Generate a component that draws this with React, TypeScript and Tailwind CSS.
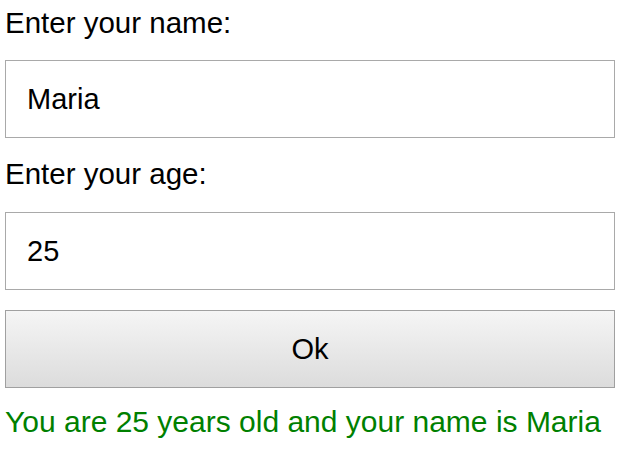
import React from "react";

export default function App() {
  return (
    <div
      className="w-[626px] h-[451px] bg-white px-[5px] pt-[6px] text-black"
      style={{ fontFamily: '"Liberation Sans", Arial, sans-serif' }}
    >
      <div className="text-[29.5px] leading-[34px]">Enter your name:</div>
      <div className="mt-[20px] h-[78px] w-[610px] border border-[#a9a9a9] bg-white pl-[21px] flex items-center text-[29px] leading-[34px]">
        Maria
      </div>
      <div className="mt-[19px] text-[29.5px] leading-[34px]">Enter your age:</div>
      <div className="mt-[21px] h-[78px] w-[610px] border border-[#a9a9a9] bg-white pl-[21px] flex items-center text-[29px] leading-[34px]">
        25
      </div>
      <div className="mt-[20px] h-[78px] w-[610px] border border-[#a0a0a0] bg-gradient-to-b from-[#f5f5f5] to-[#dcdcdc] flex items-center justify-center text-[29px] leading-[34px]">
        Ok
      </div>
      <div className="mt-[17px] text-[30px] leading-[34px] text-[#008000]">
        You are 25 years old and your name is Maria
      </div>
    </div>
  );
}
